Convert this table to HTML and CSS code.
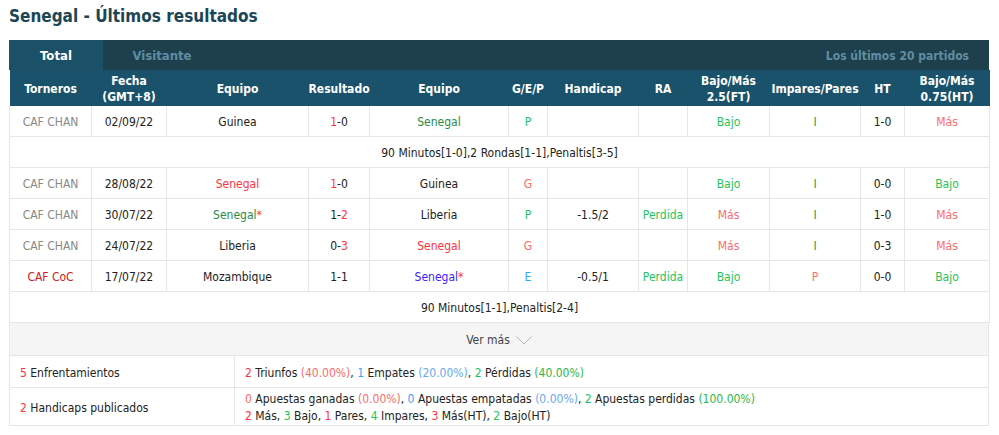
FILE: index.html
```html
<!DOCTYPE html>
<html lang="es">
<head>
  <meta charset="UTF-8" />
  <title>Senegal - Últimos resultados</title>
  <link rel="stylesheet" href="styles.css">
</head>
<body>

  <h2 class="page-title">Senegal - Últimos resultados</h2>

  <div class="results">
    <div class="tab-bar">
      <div class="tab active">Total</div>
      <div class="tab">Visitante</div>
      <div class="tab-note">Los últimos 20 partidos</div>
    </div>

    <table class="results-table">
      <colgroup>
        <col style="width:82px"><col style="width:75px"><col style="width:142px"><col style="width:61px">
        <col style="width:139px"><col style="width:39px"><col style="width:91px"><col style="width:49px">
        <col style="width:82px"><col style="width:91px"><col style="width:44px"><col style="width:85px">
      </colgroup>
      <thead>
        <tr>
          <th>Torneros</th>
          <th>Fecha<br>(GMT+8)</th>
          <th>Equipo</th>
          <th>Resultado</th>
          <th>Equipo</th>
          <th>G/E/P</th>
          <th>Handicap</th>
          <th>RA</th>
          <th>Bajo/Más<br>2.5(FT)</th>
          <th>Impares/Pares</th>
          <th>HT</th>
          <th>Bajo/Más<br>0.75(HT)</th>
        </tr>
      </thead>
      <tbody>
        <tr>
          <td class="league">CAF CHAN</td>
          <td>02/09/22</td>
          <td>Guinea</td>
          <td><span class="red">1</span>-0</td>
          <td class="team-green">Senegal</td>
          <td class="green">P</td>
          <td></td>
          <td></td>
          <td class="green">Bajo</td>
          <td class="dkgreen">I</td>
          <td>1-0</td>
          <td class="salmon">Más</td>
        </tr>
        <tr class="note">
          <td colspan="12">90 Minutos[1-0],2 Rondas[1-1],Penaltis[3-5]</td>
        </tr>
        <tr>
          <td class="league">CAF CHAN</td>
          <td>28/08/22</td>
          <td class="red">Senegal</td>
          <td><span class="red">1</span>-0</td>
          <td>Guinea</td>
          <td class="salmon">G</td>
          <td></td>
          <td></td>
          <td class="green">Bajo</td>
          <td class="dkgreen">I</td>
          <td>0-0</td>
          <td class="green">Bajo</td>
        </tr>
        <tr>
          <td class="league">CAF CHAN</td>
          <td>30/07/22</td>
          <td class="team-green">Senegal<span class="red">*</span></td>
          <td>1-<span class="red">2</span></td>
          <td>Liberia</td>
          <td class="green">P</td>
          <td>-1.5/2</td>
          <td class="green">Perdida</td>
          <td class="salmon">Más</td>
          <td class="dkgreen">I</td>
          <td>1-0</td>
          <td class="salmon">Más</td>
        </tr>
        <tr>
          <td class="league">CAF CHAN</td>
          <td>24/07/22</td>
          <td>Liberia</td>
          <td>0-<span class="red">3</span></td>
          <td class="red">Senegal</td>
          <td class="salmon">G</td>
          <td></td>
          <td></td>
          <td class="salmon">Más</td>
          <td class="dkgreen">I</td>
          <td>0-3</td>
          <td class="salmon">Más</td>
        </tr>
        <tr>
          <td class="league coc">CAF CoC</td>
          <td>17/07/22</td>
          <td>Mozambique</td>
          <td>1-1</td>
          <td class="team-blue">Senegal<span class="red">*</span></td>
          <td class="blue">E</td>
          <td>-0.5/1</td>
          <td class="green">Perdida</td>
          <td class="green">Bajo</td>
          <td class="salmon">P</td>
          <td>0-0</td>
          <td class="green">Bajo</td>
        </tr>
        <tr class="note">
          <td colspan="12">90 Minutos[1-1],Penaltis[2-4]</td>
        </tr>
      </tbody>
    </table>

    <div class="more">
      Ver más
      <svg class="chevron" width="16" height="9" viewBox="0 0 16 9"><path d="M0.5 0.5 L8 8 L15.5 0.5" fill="none" stroke="#b4b4b4" stroke-width="1"/></svg>
    </div>

    <table class="summary">
      <tr>
        <td class="summary-label"><span class="red">5</span> Enfrentamientos</td>
        <td><span class="red">2</span> Triunfos <span class="salmon">(40.00%)</span>, <span class="blue">1</span> Empates <span class="lblue">(20.00%)</span>, <span class="green">2</span> Pérdidas <span class="lgreen">(40.00%)</span></td>
      </tr>
      <tr class="tall">
        <td class="summary-label"><span class="red">2</span> Handicaps publicados</td>
        <td>
          <span class="salmon">0</span> Apuestas ganadas <span class="salmon">(0.00%)</span>, <span class="blue">0</span> Apuestas empatadas <span class="lblue">(0.00%)</span>, <span class="green">2</span> Apuestas perdidas <span class="lgreen">(100.00%)</span><br>
          <span class="red">2</span> Más, <span class="green">3</span> Bajo, <span class="red">1</span> Pares, <span class="green">4</span> Impares, <span class="red">3</span> Más(HT), <span class="green">2</span> Bajo(HT)
        </td>
      </tr>
    </table>
  </div>

</body>
</html>
```

FILE: styles.css
```css
body {
  margin: 0;
  padding: 0 10px 0 9px;
  font-family: "DejaVu Sans Condensed", "DejaVu Sans", sans-serif;
  font-size: 12px;
  color: #222;
  background: #fff;
}

.page-title {
  margin: 0;
  height: 40px;
  padding-top: 6px;
  box-sizing: border-box;
  font-size: 17px;
  font-weight: bold;
  color: #1c4656;
}

.results {
  width: 980px;
}

.tab-bar {
  display: flex;
  align-items: center;
  height: 30px;
  background-color: #1e3f4c;
  font-size: 13px;
  font-weight: bold;
}

.tab {
  width: 118px;
  height: 30px;
  line-height: 32px;
  text-align: center;
  color: #5f8ea3;
}

.tab.active {
  width: 94px;
  background-color: #1a5068;
  color: #fff;
}

.tab-note {
  margin-left: auto;
  padding: 2px 20px 0 0;
  font-size: 12px;
  color: #5f8ea3;
}

.results-table {
  width: 980px;
  table-layout: fixed;
  border-collapse: collapse;
}

.results-table th {
  height: 35px;
  padding: 1px 0 0;
  background-color: #1a526b;
  color: #fff;
  font-weight: bold;
  line-height: 16px;
}

.results-table td {
  height: 28px;
  padding: 2px 0 0;
  text-align: center;
  border: 1px solid #e6e6e6;
  border-top: 0;
}

.league { color: #888; }
.league.coc { color: #cc1c1c; }

.red { color: #ff3340; }
.salmon { color: #ff6b6b; }
.green { color: #1fc45a; }
.lgreen { color: #2bb84a; }
.dkgreen { color: #12a050; }
.team-green { color: #2a8a4a; }
.team-blue { color: #3a1cff; }
.blue { color: #33a6ff; }
.lblue { color: #66aaf0; }

.more {
  display: flex;
  align-items: center;
  justify-content: center;
  gap: 6px;
  height: 33px;
  padding-top: 2px;
  box-sizing: border-box;
  background-color: #f5f5f5;
  border: 1px solid #e6e6e6;
  border-top: 0;
  color: #444;
}

.summary {
  width: 980px;
  border-collapse: collapse;
}

.summary td {
  height: 28px;
  padding: 3px 10px 0;
  border: 1px solid #e6e6e6;
  border-top: 0;
  line-height: 17px;
}

.summary tr.tall td {
  height: 33px;
}

.summary-label {
  width: 204px;
}
```
